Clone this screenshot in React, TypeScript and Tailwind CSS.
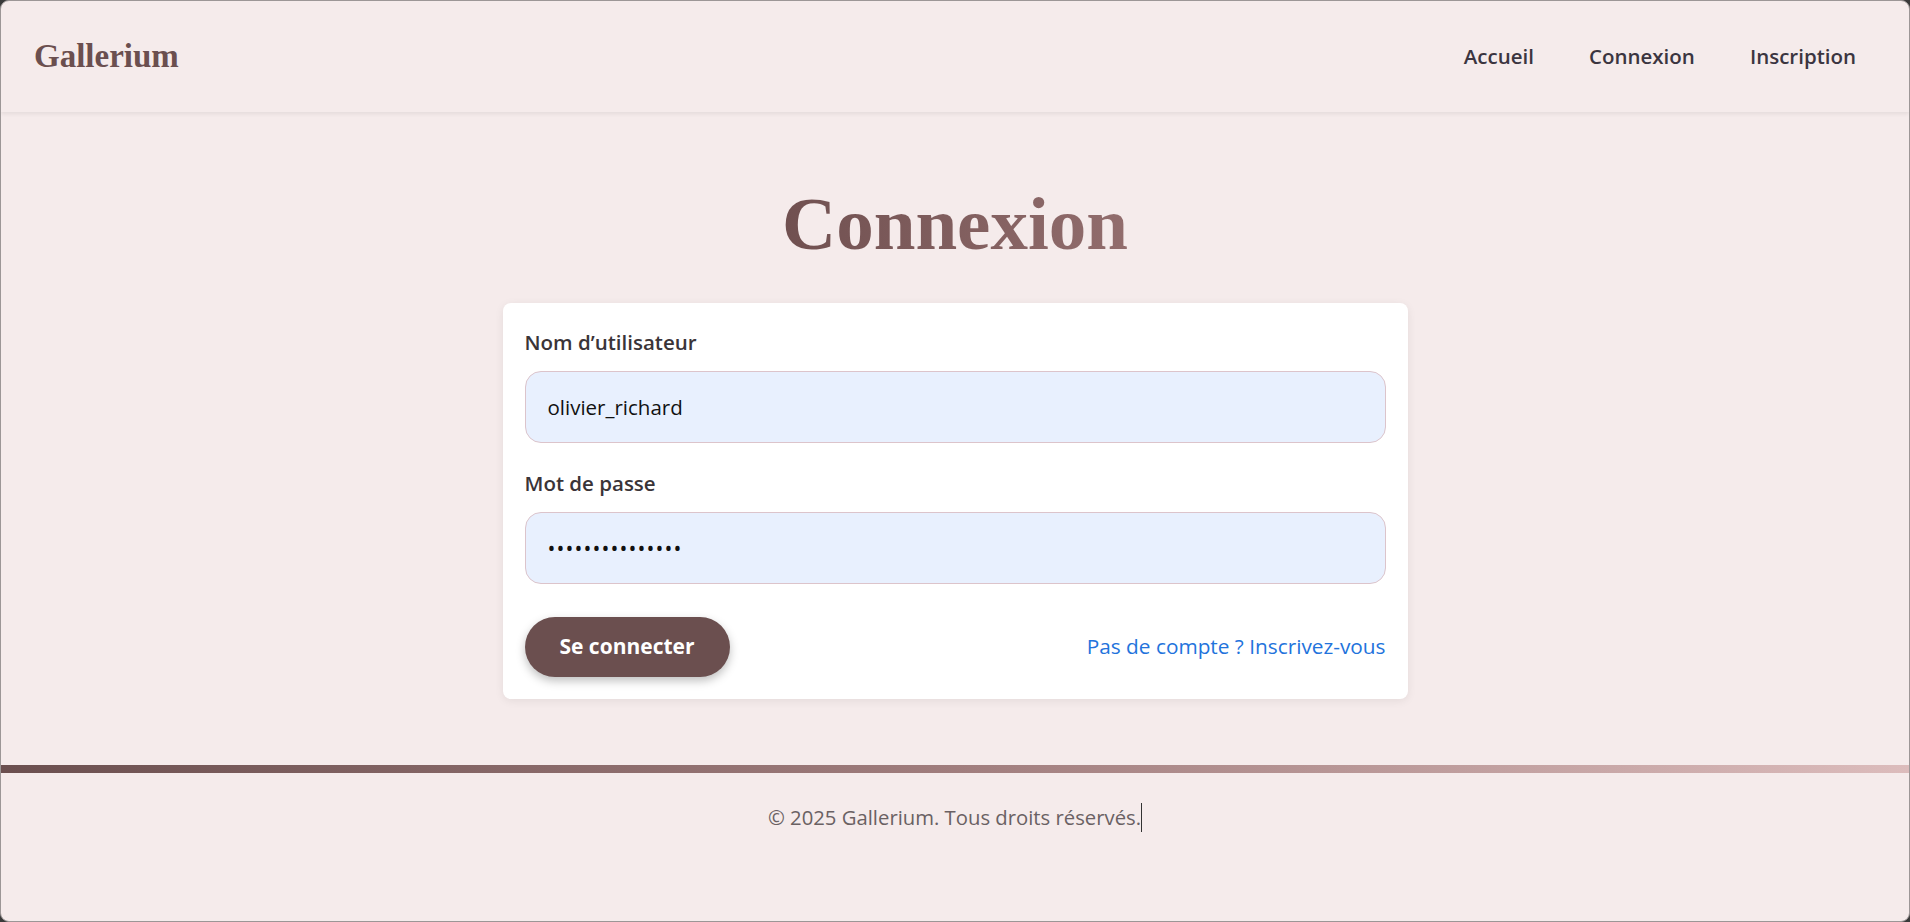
import React from "react";

const sans = "font-['Open_Sans','Noto_Sans',sans-serif]";
const serif = "font-['Liberation_Serif','Times_New_Roman',serif]";

function Header() {
  return (
    <header className="relative z-10 h-[111px] shrink-0 flex items-center justify-between pl-[33px] pr-[53px] shadow-[0_2px_4px_rgba(0,0,0,0.07)]">
      <a className={`${serif} text-[33px] font-bold text-[#6b4f4f] leading-none`}>Gallerium</a>
      <nav className={`${sans} flex items-center gap-[55px] text-[20.5px] font-semibold text-[#3b3540]`}>
        <a>Accueil</a>
        <a>Connexion</a>
        <a>Inscription</a>
      </nav>
    </header>
  );
}

function LoginCard() {
  return (
    <form className={`${sans} w-[905px] bg-white rounded-[8px] shadow-[0_2px_10px_rgba(0,0,0,0.07)] pt-[24px] px-[22px] pb-[22px]`}>
      <label className="block h-[30px] leading-[30px] text-[20.5px] font-semibold text-[#3a3438]">
        Nom d’utilisateur
      </label>
      <input
        type="text"
        readOnly
        defaultValue="olivier_richard"
        className="mt-[14px] block w-full h-[72px] px-[22px] rounded-[16px] border border-[#dcc4cb] bg-[#e8f0fe] text-[20.5px] text-[#111] outline-none"
      />
      <label className="mt-[25px] block h-[30px] leading-[30px] text-[20.5px] font-semibold text-[#3a3438]">
        Mot de passe
      </label>
      <input
        type="password"
        readOnly
        defaultValue="olivierrichard1"
        className="mt-[14px] block w-full h-[72px] px-[22px] rounded-[16px] border border-[#dcc4cb] bg-[#e8f0fe] text-[21px] tracking-[1.1px] text-[#111] outline-none"
      />
      <div className="mt-[33px] flex items-center justify-between">
        <button
          type="button"
          className="h-[60px] w-[205px] rounded-full bg-[#6b4f4f] text-white text-[21px] font-bold shadow-[0_4px_10px_rgba(0,0,0,0.25)]"
        >
          Se connecter
        </button>
        <a className="text-[20.8px] text-[#2273dc]">Pas de compte ? Inscrivez-vous</a>
      </div>
    </form>
  );
}

export default function App() {
  return (
    <div className="h-[922px] w-full bg-[#3a3a3a]">
      <div className="h-full rounded-[9px] overflow-hidden border border-[#9c9696] bg-[#f5ebeb] flex flex-col">
        <Header />
        <main className="flex flex-col items-center pt-[74px]">
          <h1
            className={`${serif} text-[75px] font-bold leading-none bg-gradient-to-r from-[#705050] to-[#926d6d] bg-clip-text text-transparent`}
          >
            Connexion
          </h1>
          <div className="mt-[42px]">
            <LoginCard />
          </div>
        </main>
        <footer className="mt-[66px]">
          <div className="h-[8px] bg-gradient-to-r from-[#6b4f4f] via-[#a07d7d] to-[#dcbcbc]" />
          <p className={`${sans} pt-[29px] h-[59px] flex items-center justify-center text-[20.3px] text-[#6a6163]`}>
            © 2025 Gallerium. Tous droits réservés.
            <span className="inline-block w-px h-[29px] bg-[#333]" />
          </p>
        </footer>
      </div>
    </div>
  );
}
